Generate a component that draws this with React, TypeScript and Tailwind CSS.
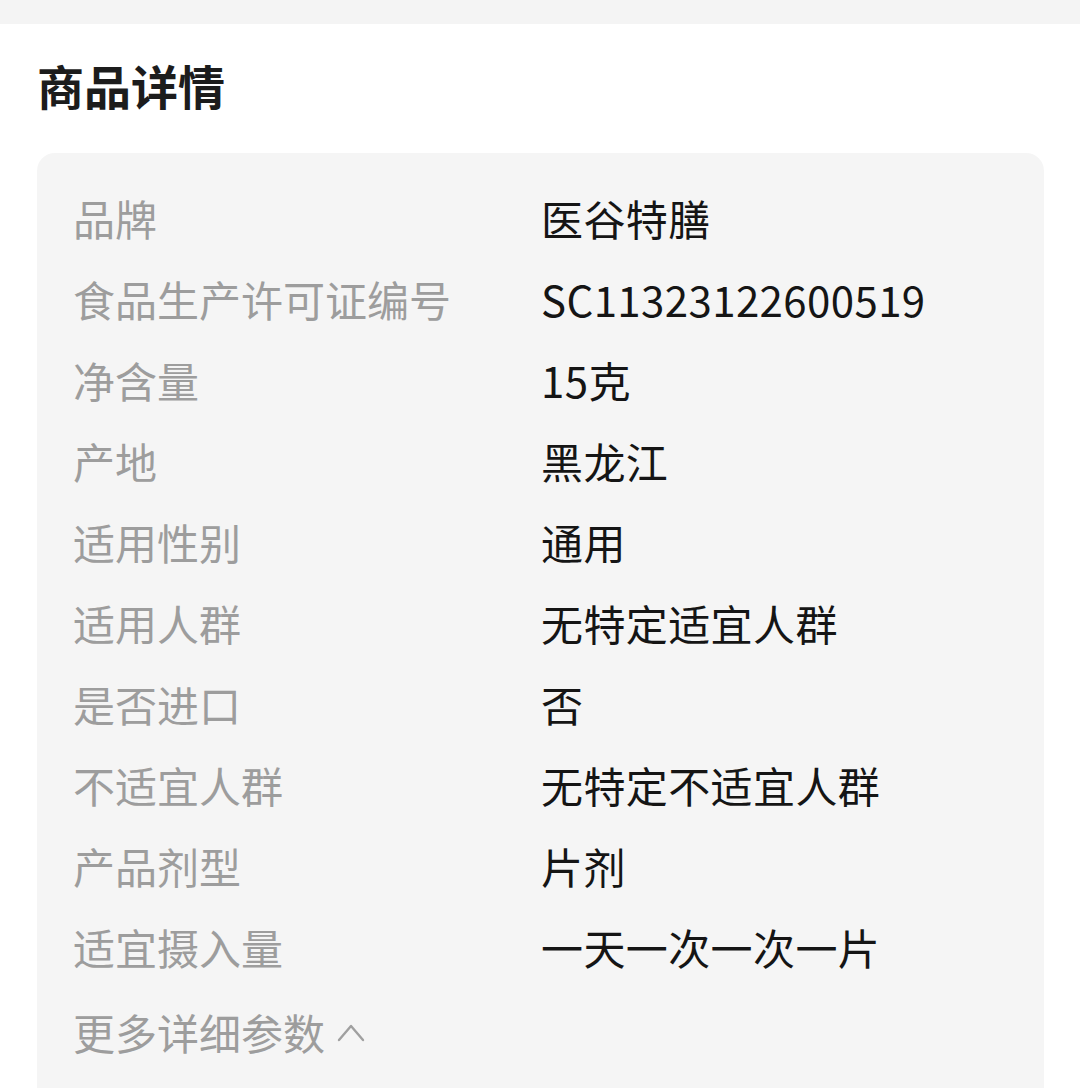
const rows: [string, string][] = [
  ["品牌", "医谷特膳"],
  ["食品生产许可证编号", "SC11323122600519"],
  ["净含量", "15克"],
  ["产地", "黑龙江"],
  ["适用性别", "通用"],
  ["适用人群", "无特定适宜人群"],
  ["是否进口", "否"],
  ["不适宜人群", "无特定不适宜人群"],
  ["产品剂型", "片剂"],
  ["适宜摄入量", "一天一次一次一片"],
];

export default function App() {
  return (
    <div
      className="w-[1080px] h-[1088px] overflow-hidden bg-white"
      style={{ fontFamily: '"Noto Sans CJK SC", "Noto Sans", sans-serif' }}
    >
      {/* top strip */}
      <div className="h-[24px] bg-[#f4f4f4]" />

      {/* title */}
      <div className="h-[129px] flex items-center pl-[37px] pb-[8px]">
        <h2 className="text-[47px] leading-none font-bold text-[#1c1c1c]">商品详情</h2>
      </div>

      {/* detail card */}
      <div className="ml-[37px] w-[1007px] rounded-[18px] bg-[#f5f5f5] pt-[24px] pl-[36px] pb-[40px]">
        {rows.map(([label, value]) => (
          <div key={label} className="h-[81px] flex items-center text-[42px] leading-none">
            <div className="w-[468px] text-[#9d9d9d]">{label}</div>
            <div className="text-[#151515] tracking-[0.4px]">{value}</div>
          </div>
        ))}
        <div className="h-[90px] flex items-center text-[42px] leading-none text-[#9d9d9d]">
          <span>更多详细参数</span>
          <svg
            className="ml-[12px]"
            width="28"
            height="20"
            viewBox="0 0 28 20"
            fill="none"
            stroke="#a0a0a0"
            strokeWidth="2.4"
            strokeLinecap="round"
            strokeLinejoin="round"
          >
            <polyline points="2,18 14,4 26,18" />
          </svg>
        </div>
      </div>
    </div>
  );
}
